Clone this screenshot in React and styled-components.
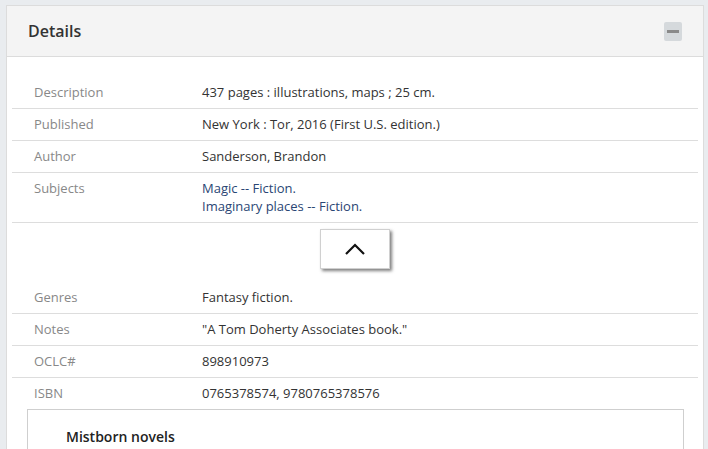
import React from 'react';
import styled, { createGlobalStyle } from 'styled-components';

const GlobalStyle = createGlobalStyle`
  body {
    margin: 0;
    background: #e9ecef;
    font-family: 'Open Sans', 'Liberation Sans', sans-serif;
  }
`;

const Page = styled.div`
  padding: 5px 4px 0 6px;
  height: 449px;
  box-sizing: border-box;
  overflow: hidden;
`;

const Panel = styled.section`
  border: 1px solid #dcdcdc;
  background: #fff;
`;

const Header = styled.div`
  display: flex;
  align-items: center;
  justify-content: space-between;
  height: 50px;
  padding: 0 21px 0 21px;
  background: #f4f4f4;
  border-bottom: 1px solid #dcdcdc;
`;

const Title = styled.h2`
  margin: 0;
  font-size: 16px;
  font-weight: 600;
  color: #333;
`;

const Collapse = styled.button`
  width: 18px;
  height: 19px;
  padding: 0;
  border: none;
  border-radius: 2px;
  background: #d5d9dc;
  display: flex;
  align-items: center;
  justify-content: center;
  &::before {
    content: '';
    width: 12px;
    height: 3px;
    background: #8a8a8a;
  }
`;

const Body = styled.div`
  padding: 20px 5px 0 5px;
`;

const Row = styled.div`
  display: grid;
  grid-template-columns: 190px 1fr;
  padding: 6px 0 7px;
  line-height: 18px;
  font-size: 13px;
  border-bottom: ${p => (p.$last ? 'none' : '1px solid #dddddd')};
`;

const Label = styled.div`
  padding-left: 22px;
  color: #888;
`;

const Value = styled.div`
  color: #333;
`;

const Link = styled.a`
  display: block;
  color: #2a4674;
  text-decoration: none;
`;

const ToggleArea = styled.div`
  display: flex;
  justify-content: center;
  padding: 6px 0 13px;
`;

const ToggleButton = styled.button`
  width: 70px;
  height: 40px;
  background: #fff;
  border: 1px solid #d0d0d0;
  box-shadow: 2px 2px 3px rgba(0, 0, 0, 0.5);
  display: flex;
  align-items: center;
  justify-content: center;
  padding: 0;
`;

const Series = styled.div`
  margin: 0 14px 0 15px;
  border: 1px solid #cfcfcf;
  border-bottom: none;
  padding: 17px 38px 20px;
`;

const SeriesTitle = styled.h3`
  margin: 0;
  font-size: 14px;
  font-weight: 600;
  color: #222;
`;

const top = [
  ['Description', '437 pages : illustrations, maps ; 25 cm.'],
  ['Published', 'New York : Tor, 2016 (First U.S. edition.)'],
  ['Author', 'Sanderson, Brandon'],
];

const bottom = [
  ['Genres', 'Fantasy fiction.'],
  ['Notes', '"A Tom Doherty Associates book."'],
  ['OCLC#', '898910973'],
  ['ISBN', '0765378574, 9780765378576'],
];

export default function App() {
  return (
    <Page>
      <GlobalStyle />
      <Panel>
        <Header>
          <Title>Details</Title>
          <Collapse aria-label="Collapse" />
        </Header>
        <Body>
          {top.map(([k, v]) => (
            <Row key={k}>
              <Label>{k}</Label>
              <Value>{v}</Value>
            </Row>
          ))}
          <Row>
            <Label>Subjects</Label>
            <Value>
              <Link href="#">Magic -- Fiction.</Link>
              <Link href="#">Imaginary places -- Fiction.</Link>
            </Value>
          </Row>
          <ToggleArea>
            <ToggleButton aria-label="Show less">
              <svg width="22" height="12" viewBox="0 0 22 12">
                <path d="M2 11 L11 2 L20 11" fill="none" stroke="#111" strokeWidth="2.2" />
              </svg>
            </ToggleButton>
          </ToggleArea>
          {bottom.map(([k, v], i) => (
            <Row key={k} $last={i === bottom.length - 1}>
              <Label>{k}</Label>
              <Value>{v}</Value>
            </Row>
          ))}
          <Series>
            <SeriesTitle>Mistborn novels</SeriesTitle>
          </Series>
        </Body>
      </Panel>
    </Page>
  );
}
